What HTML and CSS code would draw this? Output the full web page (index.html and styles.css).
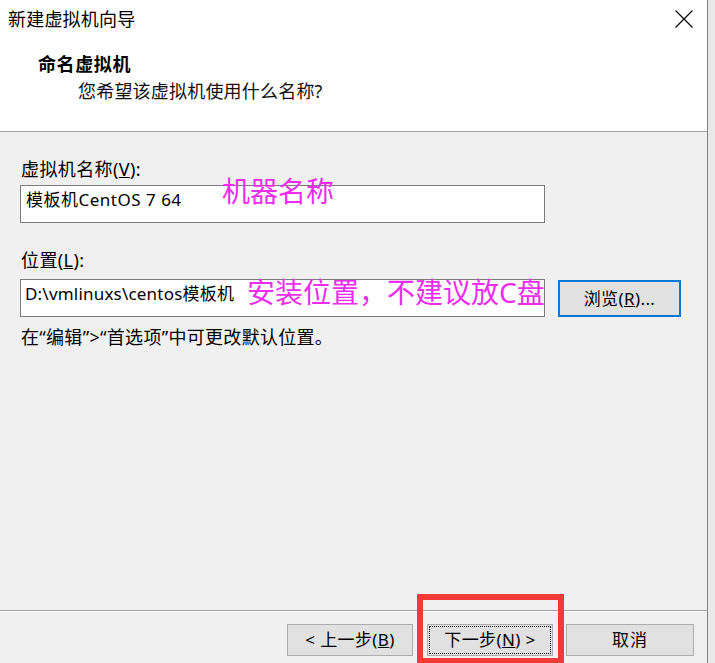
FILE: index.html
```html
<!DOCTYPE html>
<html lang="zh-CN">
<head>
<meta charset="utf-8">
<title>新建虚拟机向导</title>
<link rel="stylesheet" href="styles.css">
</head>
<body>
<div class="window">
  <div class="main">
    <header class="header">
      <div class="titlebar">
        <span class="title">新建虚拟机向导</span>
        <svg class="close" width="18" height="18" viewBox="0 0 18 18" aria-hidden="true">
          <path d="M0.5 0.5 L17.5 17.5 M17.5 0.5 L0.5 17.5" stroke="#000" stroke-width="1.1" fill="none"/>
        </svg>
      </div>
      <div class="heading">命名虚拟机</div>
      <div class="subheading">您希望该虚拟机使用什么名称?</div>
    </header>

    <section class="content">
      <div class="label label-first">虚拟机名称(<u>V</u>):</div>
      <div class="textbox">模板机CentOS 7 64</div>

      <div class="label label-second">位置(<u>L</u>):</div>
      <div class="row">
        <div class="textbox">D:\vmlinuxs\centos模板机</div>
        <button class="btn btn-browse">浏览(<u>R</u>)...</button>
      </div>
      <div class="hint">在“编辑”&gt;“首选项”中可更改默认位置。</div>

      <div class="note note-name">机器名称</div>
      <div class="note note-path">安装位置，不建议放C盘</div>
    </section>

    <footer class="footer">
      <button class="btn btn-back">&lt; 上一步(<u>B</u>)</button>
      <button class="btn btn-next">下一步(<u>N</u>) &gt;</button>
      <button class="btn btn-cancel">取消</button>
      <div class="highlight"></div>
    </footer>
  </div>
  <div class="edge"></div>
</div>
</body>
</html>
```

FILE: styles.css
```css
html, body {
  margin: 0;
  padding: 0;
}

body {
  width: 715px;
  height: 663px;
  overflow: hidden;
  background: #f0f0f0;
  font-family: "Noto Sans", "Noto Sans CJK SC", sans-serif;
  color: #000;
}

.window {
  display: flex;
  width: 715px;
  height: 663px;
}

.main {
  width: 707px;
  height: 663px;
  display: flex;
  flex-direction: column;
  position: relative;
}

.edge {
  width: 8px;
  box-sizing: border-box;
  border-left: 1px solid #808080;
  background: #e9e9e9;
}

/* Header */
.header {
  height: 132px;
  box-sizing: border-box;
  background: #fff;
  border-bottom: 1px solid #a0a0a0;
  flex: none;
}

.titlebar {
  display: flex;
  justify-content: space-between;
  align-items: flex-start;
  padding: 6px 14px 0 8px;
}

.title {
  font-size: 18px;
  line-height: 26px;
  letter-spacing: 0.2px;
}

.close {
  margin-top: 4px;
}

.heading {
  margin: 19px 0 0 38px;
  font-size: 18px;
  line-height: 26px;
  font-weight: 700;
  letter-spacing: 0.6px;
}

.subheading {
  margin: 1px 0 0 78px;
  font-size: 18px;
  line-height: 26px;
  letter-spacing: 0.2px;
  color: #111;
}

/* Content */
.content {
  flex: 1;
  position: relative;
  padding: 24px 0 0 20px;
}

.label {
  font-size: 18px;
  line-height: 26px;
  letter-spacing: 0.4px;
  padding-left: 1px;
}

.label-second {
  margin-top: 24px;
}

.textbox {
  width: 525px;
  height: 38px;
  box-sizing: border-box;
  margin-top: 3px;
  border: 1px solid #7a7a7a;
  background: #fff;
  padding: 2px 5px 0;
  font-size: 17px;
  line-height: 24px;
  letter-spacing: 0.5px;
  white-space: nowrap;
}

.row {
  display: flex;
  align-items: flex-start;
  gap: 13px;
  margin-top: 6px;
}

.row .textbox {
  margin-top: 0;
  padding-left: 4px;
  letter-spacing: 0.2px;
}

.hint {
  margin-top: 7px;
  padding-left: 1px;
  font-size: 18px;
  line-height: 26px;
  letter-spacing: 0.3px;
}

.note {
  position: absolute;
  font-size: 28px;
  line-height: 28px;
  color: #ec2ded;
  white-space: nowrap;
}

.note-name {
  left: 222px;
  top: 45px;
}

.note-path {
  left: 247px;
  top: 146px;
}

/* Buttons */
.btn {
  font-family: "Noto Sans", "Noto Sans CJK SC", sans-serif;
  font-size: 17px;
  color: #000;
  background: #e1e1e1;
  border: 1px solid #adadad;
  margin: 0;
  padding: 0;
  box-sizing: border-box;
  line-height: 22px;
  cursor: default;
}

.btn-browse {
  width: 123px;
  height: 37px;
  margin-top: 1px;
  border: 2px solid #0078d7;
  letter-spacing: 0.4px;
}

/* Footer */
.footer {
  height: 53px;
  box-sizing: border-box;
  border-top: 1px solid #a0a0a0;
  box-shadow: inset 0 1px #fff;
  display: flex;
  justify-content: flex-end;
  align-items: flex-start;
  padding: 13px 13px 0 0;
  position: relative;
  flex: none;
}

.btn-back,
.btn-next {
  width: 126px;
  height: 32px;
  letter-spacing: 0.4px;
}

.btn-back {
  margin-right: 14px;
}

.btn-next {
  margin-right: 13px;
  outline: 1px dotted #000;
  outline-offset: -3px;
}

.btn-cancel {
  width: 128px;
  height: 32px;
  letter-spacing: 1px;
}

.highlight {
  position: absolute;
  left: 417px;
  top: -17px;
  width: 147px;
  height: 70px;
  box-sizing: border-box;
  border: 6px solid #f03a3a;
  pointer-events: none;
}
```
